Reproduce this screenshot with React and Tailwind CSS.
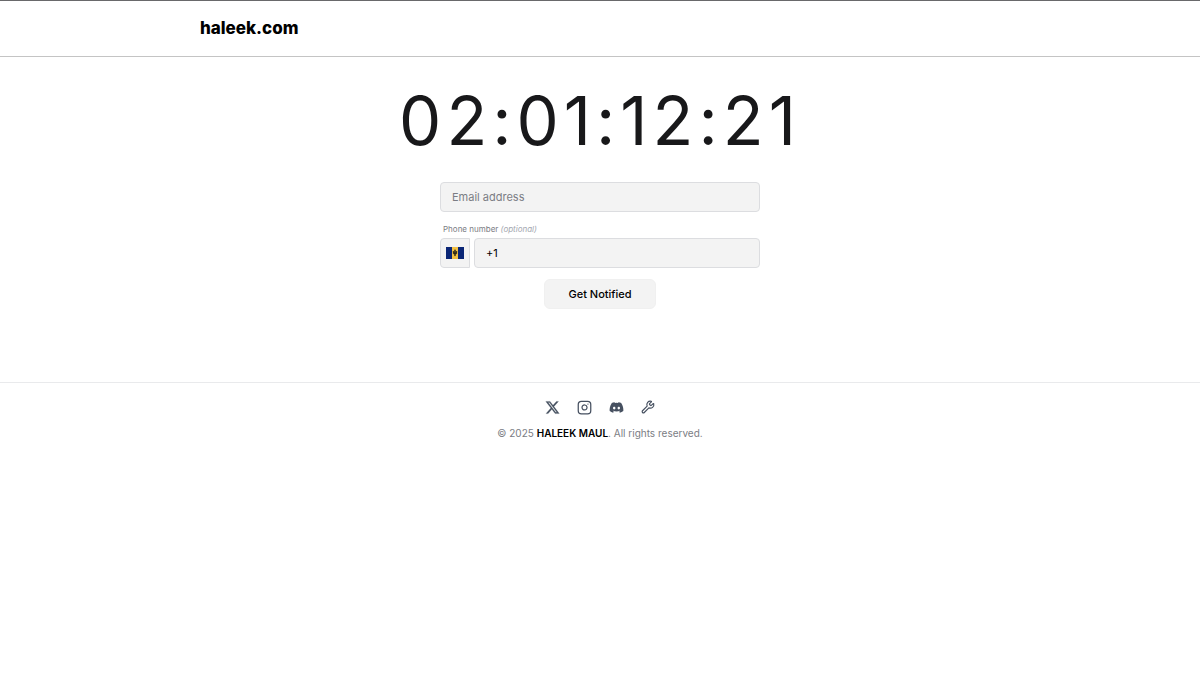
import React, { useState } from 'react'
import { FaDiscord, FaXTwitter } from 'react-icons/fa6'
import { Instagram, Wrench } from 'lucide-react'

const links = [
  { name: 'X', href: '#x', icon: <FaXTwitter size={15} stroke="currentColor" strokeWidth={8} /> },
  { name: 'Instagram', href: '#instagram', icon: <Instagram size={15} /> },
  { name: 'Discord', href: '#discord', icon: <FaDiscord size={15} /> },
  { name: 'Tools', href: '#tools', icon: <Wrench size={14} /> }
]

const BarbadosFlag = () => (
  <svg width="18" height="12" viewBox="0 0 18 12" aria-hidden="true">
    <rect width="18" height="12" fill="#0b2676" />
    <rect x="6" width="6" height="12" fill="#f3c144" />
    <path
      d="M9 2.6l.7 1.7-.3.1v1.4h.5c.2-.9.4-1.4 1-1.8-.2 1.1-.2 2.1-.2 2.8H9.4v2H8.6v-2H7.3c0-.7 0-1.7-.2-2.8.6.4.8.9 1 1.8h.5V4.4l-.3-.1z"
      fill="#1a1a14"
      stroke="#1a1a14"
      strokeWidth=".5"
    />
  </svg>
)

const NotifyForm = () => {
  const [email, setEmail] = useState('')
  const [phone, setPhone] = useState('+1')

  return (
    <form className="mx-auto w-full max-w-80" onSubmit={e => e.preventDefault()}>
      <input
        className="block h-[30px] w-full rounded border border-[#dcdde0] bg-[#f3f3f3] px-[11px] text-[11px] text-black placeholder:text-[#7b7d84]"
        type="email"
        name="email"
        aria-label="Email address"
        placeholder="Email address"
        value={email}
        onChange={e => setEmail(e.target.value)}
      />
      <label className="mt-2.5 mb-0.5 block px-[3px] text-[8px] leading-[14px] text-[#7b7d84]" htmlFor="phone">
        Phone number <span className="text-[#a4a8b0] italic">(optional)</span>
      </label>
      <div className="flex gap-1">
        <button
          className="flex size-[30px] shrink-0 items-center justify-center rounded-l border border-[#dcdde0] bg-[#f3f3f3]"
          type="button"
          aria-label="Country: Barbados"
        >
          <BarbadosFlag />
        </button>
        <input
          className="h-[30px] min-w-0 flex-1 rounded border border-[#dcdde0] bg-[#f3f3f3] px-[11px] text-[11px] text-black"
          id="phone"
          type="tel"
          name="phone"
          value={phone}
          onChange={e => setPhone(e.target.value)}
        />
      </div>
      <button
        className="mx-auto mt-[11px] block h-[30px] rounded-md border border-[#f0f0f0] bg-[#f3f3f3] px-[23px] text-[11px] font-medium text-black"
        type="submit"
      >
        Get Notified
      </button>
    </form>
  )
}

const App = () => (
  <div className="min-h-screen bg-white font-['Inter',sans-serif]">
    <header className="border-t border-b border-t-[#69696b] border-b-[#c4c4c4]">
      <div className="mx-auto flex h-[55px] w-2/3 items-center">
        <a href="/" className="text-[17px] font-extrabold text-black">haleek.com</a>
      </div>
    </header>

    <main className="px-4 pt-[30px] pb-[73px]">
      <h1 className="mb-[27px] text-center text-[67px] leading-[68px] tracking-[5px] text-[#18181a]">
        02:01:12:21
      </h1>
      <NotifyForm />
    </main>

    <footer className="flex flex-col items-center border-t border-[#e9eaec] pt-4">
      <nav className="flex h-4 items-center gap-[17px] text-[#465060]">
        {links.map(({ name, href, icon }) => (
          <a key={name} href={href} aria-label={name}>{icon}</a>
        ))}
      </nav>
      <p className="mt-2.5 text-[10px] leading-4 text-[#7b7d84]">
        © 2025 <a href="/" className="font-semibold text-black">HALEEK MAUL</a>. All rights reserved.
      </p>
    </footer>
  </div>
)

export default App
